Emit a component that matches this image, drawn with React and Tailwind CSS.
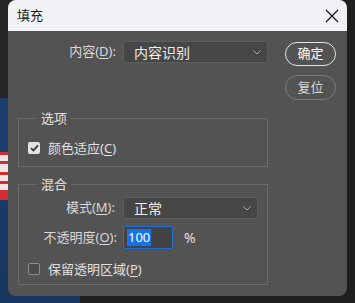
import React from 'react';

const font = "font-['Noto_Sans','Noto_Sans_CJK_SC',sans-serif]";

function Mn({ children }) {
  return <span className="underline underline-offset-2 decoration-1">{children}</span>;
}

function Chevron() {
  return (
    <svg width="8" height="5" viewBox="0 0 8 5" className="shrink-0">
      <path d="M0.5 0.5 L4 4 L7.5 0.5" fill="none" stroke="#a8a8a8" strokeWidth="1" />
    </svg>
  );
}

function Select({ value, width }) {
  return (
    <div
      className={`h-[22px] ${width} flex items-center justify-between pl-[10px] pr-[6px] bg-[#464646] border border-[#5e5e5e] rounded-[3px] text-[14px] text-[#ececec]`}
    >
      <span>{value}</span>
      <Chevron />
    </div>
  );
}

function Checkbox({ checked }) {
  if (checked) {
    return (
      <div className="w-[12px] h-[12px] rounded-[2px] bg-[#e4e4e4] flex items-center justify-center shrink-0">
        <svg width="9" height="8" viewBox="0 0 9 8">
          <path d="M1 4.2 L3.4 6.4 L8 1.4" fill="none" stroke="#3a3a3a" strokeWidth="1.8" />
        </svg>
      </div>
    );
  }
  return <div className="w-[12px] h-[12px] rounded-[2px] bg-[#4a4a4a] border border-[#8c8c8c] shrink-0" />;
}

function Group({ title, className, children }) {
  return (
    <fieldset className={`border border-[#6b6b6b] w-[250px] ${className}`}>
      <legend className="ml-[18px] px-[4px] text-[13px] leading-[18px] text-[#e2e2e2]">{title}</legend>
      {children}
    </fieldset>
  );
}

export default function App() {
  return (
    <div className={`relative w-[355px] h-[303px] overflow-hidden bg-[#1f1f1f] ${font}`}>
      {/* canvas behind the dialog */}
      <div className="absolute left-0 top-0 w-[8px] h-[98px] bg-[#262626]" />
      <div className="absolute left-0 top-[98px] w-[80px] h-[205px] bg-gradient-to-b from-[#1d3f70] to-[#16365f]" />
      <div className="absolute left-0 top-[152px] w-[8px] h-[48px] bg-[#d42c2c] flex flex-col gap-[3px] py-[3px]">
        <div className="h-[6px] bg-[#f1e6e6]" />
        <div className="h-[8px] bg-[#f1e6e6]" />
        <div className="h-[6px] bg-[#f1e6e6]" />
        <div className="h-[6px] bg-[#f1e6e6]" />
      </div>

      {/* dialog */}
      <div className="relative ml-[8px] w-[339px] h-[296px] rounded-[8px] overflow-hidden bg-[#535353] flex flex-col">
        <div className="h-[31px] shrink-0 bg-[#f0f2f5] flex items-center justify-between pl-[9px] pr-[8px]">
          <span className="text-[13px] text-[#1a1a1a]">填充</span>
          <svg width="14" height="14" viewBox="0 0 14 14">
            <path d="M1 1 L13 13 M13 1 L1 13" stroke="#1a1a1a" strokeWidth="1.3" fill="none" />
          </svg>
        </div>

        <div className="flex">
          {/* left column */}
          <div className="pl-[10px] flex flex-col">
            <div className="mt-[10px] flex items-center">
              <span className="w-[98px] text-right text-[13px] text-[#d8d8d8]">
                内容(<Mn>D</Mn>):
              </span>
              <div className="ml-[7px]">
                <Select value="内容识别" width="w-[145px]" />
              </div>
            </div>

            <Group title="选项" className="mt-[46px]">
              <div className="flex items-center mt-[14px] mb-[12px] pl-[9px] h-[13px]">
                <Checkbox checked />
                <span className="ml-[8px] text-[13px] text-[#e0e0e0] mt-[2px]">
                  颜色适应(<Mn>C</Mn>)
                </span>
              </div>
            </Group>

            <Group title="混合" className="mt-[8px]">
              <div className="flex items-center mt-[4px]">
                <span className="w-[96px] text-right text-[13px] text-[#d8d8d8]">
                  模式(<Mn>M</Mn>):
                </span>
                <div className="ml-[8px]">
                  <Select value="正常" width="w-[135px]" />
                </div>
              </div>
              <div className="flex items-center mt-[7px]">
                <span className="w-[98px] text-right text-[13px] text-[#d8d8d8]">
                  不透明度(<Mn>O</Mn>):
                </span>
                <div className="ml-[6px] w-[50px] h-[23px] bg-[#434343] border border-[#1d6fd6] rounded-[2px] flex items-center pl-[3px]">
                  <span className="bg-[#1473e6] text-white text-[13px] leading-[17px] px-[1px]">100</span>
                </div>
                <span className="ml-[11px] text-[14px] text-[#e0e0e0]">%</span>
              </div>
              <div className="flex items-center mt-[13px] mb-[9px] pl-[9px] h-[13px]">
                <Checkbox />
                <span className="ml-[8px] text-[13px] text-[#e0e0e0] mt-[2px]">
                  保留透明区域(<Mn>P</Mn>)
                </span>
              </div>
            </Group>
          </div>

          {/* right column */}
          <div className="ml-[17px] flex flex-col">
            <button className="mt-[11px] w-[51px] h-[24px] rounded-full border-[1.5px] border-[#e6e6e6] text-[13px] text-white flex items-center justify-center">
              确定
            </button>
            <button className="mt-[9px] w-[51px] h-[25px] rounded-full border-[1.5px] border-[#7c7c7c] text-[13px] text-[#d8d8d8] flex items-center justify-center">
              复位
            </button>
          </div>
        </div>
      </div>
    </div>
  );
}
